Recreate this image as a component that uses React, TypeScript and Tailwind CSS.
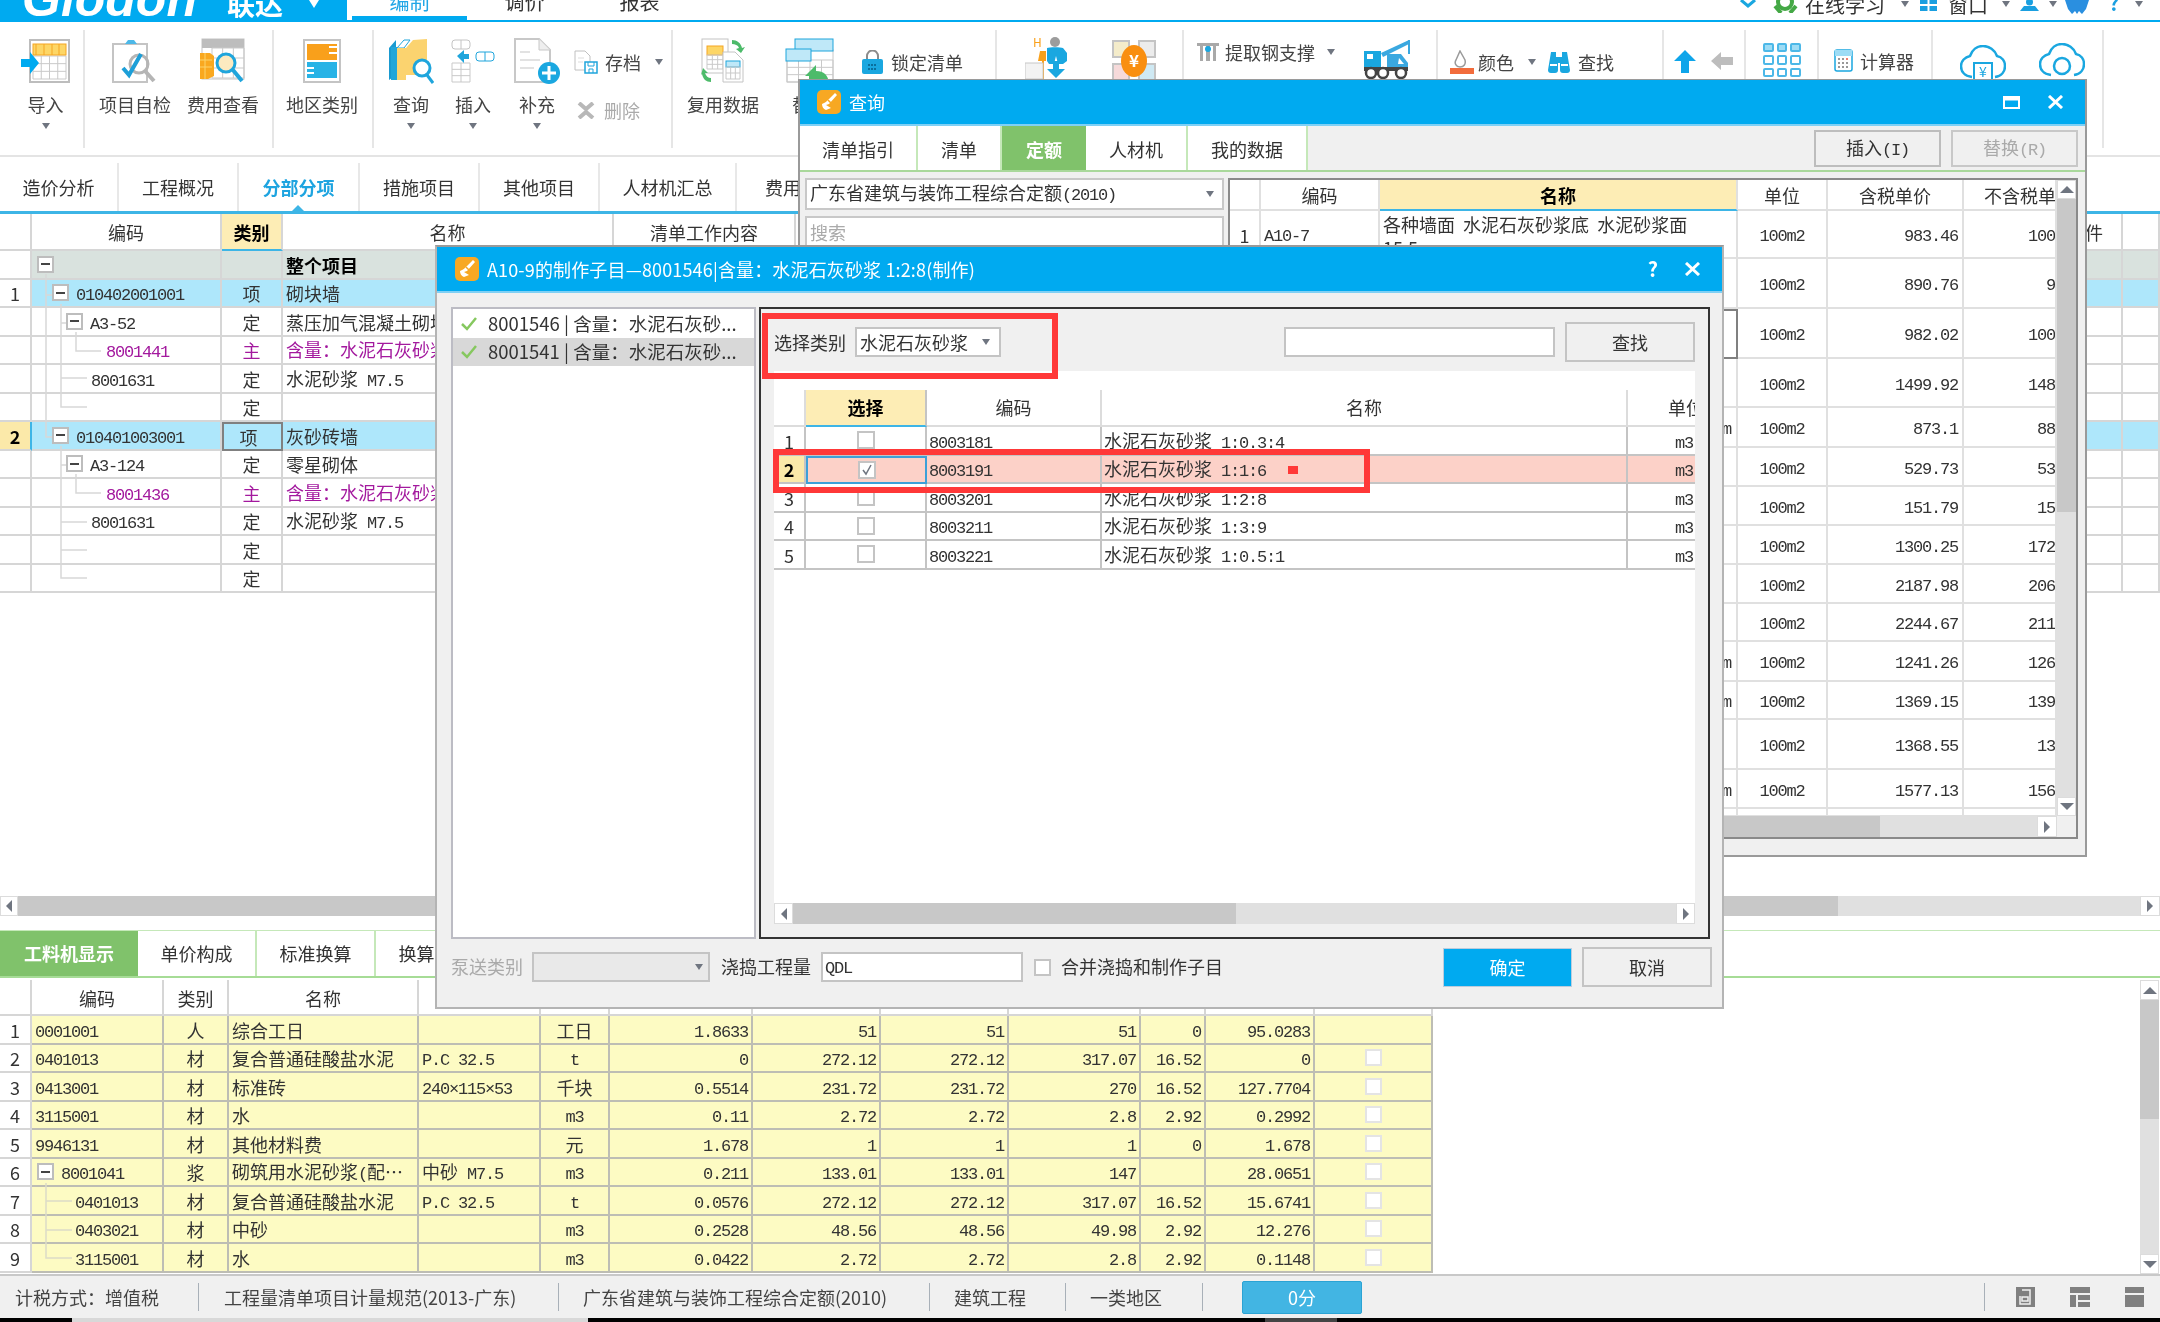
import React from "react";

const mono = "font-['Liberation_Mono','Noto_Sans_CJK_SC',monospace] text-[17px] tracking-[-1.2px]";

// ascii runs go in a narrow mono font, like the half-width digits of the grids
function Mix({ s }: { s: string }) {
  const parts = s.split(/([\x00-\x7f×]+)/).filter(Boolean);
  return (
    <span className="whitespace-pre">
      {parts.map((p, i) =>
        /^[\x00-\x7f×]+$/.test(p) ? (
          <span key={i} className={mono}>
            {p}
          </span>
        ) : (
          <span key={i}>{p}</span>
        ),
      )}
    </span>
  );
}

function Tri({ down = true, className = "" }: { down?: boolean; className?: string }) {
  return (
    <svg width="8" height="6" viewBox="0 0 8 6" className={"shrink-0 " + className}>
      <path d={down ? "M0 0h8L4 6z" : "M0 6h8L4 0z"} fill="#6f7580" />
    </svg>
  );
}

function Sep({ className = "" }: { className?: string }) {
  return <div className={"w-[2px] h-[118px] mt-[8px] bg-[#e6e6e6] shrink-0 " + className} />;
}

function Big({
  className,
  label,
  arrow,
  children,
}: {
  className: string;
  label: string;
  arrow?: boolean;
  children: React.ReactNode;
}) {
  return (
    <div className={"flex flex-col items-center pt-[16px] shrink-0 " + className}>
      <div className="h-[46px] flex items-center justify-center">{children}</div>
      <div className="mt-[8px] text-[18px] leading-[24px] text-[#444] whitespace-nowrap">{label}</div>
      {arrow && <Tri className="mt-[7px]" />}
    </div>
  );
}

function AppLogo() {
  return (
    <svg width="24" height="24" viewBox="0 0 24 24" className="shrink-0">
      <rect x="0" y="0" width="24" height="24" rx="5" fill="#f7a823" />
      <path d="M5 14c3-1 5-3 7-5l6-6 2 2-8 9-3 1 5 3-5 2c-3-1-4-4-4-6z" fill="#fff" />
      <path d="M11 10l3 3" stroke="#f7a823" strokeWidth="1.5" />
    </svg>
  );
}

function GridLines({ x, y, w, h, cols, rows, c = "#c9c9c9" }: { x: number; y: number; w: number; h: number; cols: number; rows: number; c?: string }) {
  const out: React.ReactNode[] = [];
  for (let i = 0; i <= cols; i++) out.push(<path key={"c" + i} d={`M${x + (i * w) / cols} ${y}v${h}`} stroke={c} fill="none" />);
  for (let i = 0; i <= rows; i++) out.push(<path key={"r" + i} d={`M${x} ${y + (i * h) / rows}h${w}`} stroke={c} fill="none" />);
  return <>{out}</>;
}

function ImportIcon() {
  return (
    <svg width="49" height="44" viewBox="0 0 49 44">
      <rect x="9" y="1" width="39" height="42" fill="#fff" stroke="#bdbdbd" strokeWidth="2" />
      <GridLines x={12} y={17} w={33} h={23} cols={4} rows={3} />
      <rect x="12" y="5" width="33" height="11" fill="#fdd666" stroke="#f5a623" />
      <path d="M15 16V5M23 16V5M31 16V5M38 16V5" stroke="#f5a623" />
      <path d="M0 20h9v-7l9 11-9 11v-7H0z" fill="#00aaf0" />
    </svg>
  );
}

function CheckIcon() {
  return (
    <svg width="46" height="46" viewBox="0 0 46 46">
      <rect x="1" y="6" width="34" height="38" fill="#fff" stroke="#c4c4c4" strokeWidth="2" />
      <path d="M13 6l3-4h6l3 4z" fill="#4cb8e8" />
      <circle cx="27" cy="26" r="9" fill="none" stroke="#b5b5b5" strokeWidth="3" />
      <path d="M33 33l9 10" stroke="#b5b5b5" strokeWidth="4" />
      <path d="M11 30l6 7 12-21" fill="none" stroke="#1d9fd8" strokeWidth="4" />
    </svg>
  );
}

function CostIcon() {
  return (
    <svg width="46" height="46" viewBox="0 0 46 46">
      <rect x="2" y="1" width="42" height="40" fill="#fff" stroke="#c4c4c4" />
      <rect x="2" y="1" width="42" height="9" fill="#bdbdbd" />
      <GridLines x={12} y={10} w={32} h={30} cols={3} rows={3} />
      <path d="M0 15h10l4 3v20l-6 3H0z" fill="#f9a81f" />
      <path d="M0 22h12M0 29h12M5 15v26" stroke="#fcd36b" />
      <circle cx="26" cy="25" r="9" fill="#fdeac0" stroke="#1fa5dc" strokeWidth="3" />
      <path d="M33 32l9 11" stroke="#1fa5dc" strokeWidth="4" />
    </svg>
  );
}

function RegionIcon() {
  return (
    <svg width="38" height="44" viewBox="0 0 38 44">
      <rect x="1" y="1" width="36" height="42" fill="#fff" stroke="#c4c4c4" strokeWidth="2" />
      <rect x="4" y="5" width="30" height="16" fill="#f9a01b" />
      <rect x="4" y="23" width="30" height="16" fill="#28b3e6" />
      <path d="M26 8h8M26 14h8M4 29h7M4 34h7" stroke="#fff" strokeWidth="2" />
    </svg>
  );
}

function QueryIcon() {
  return (
    <svg width="46" height="46" viewBox="0 0 46 46">
      <path d="M1 10l7-8v35l-7 5z" fill="#1a9ad0" />
      <rect x="3" y="9" width="6" height="33" fill="#21a6da" />
      <path d="M9 10l7-8h6l-6 8z" fill="#fff" stroke="#21a6da" />
      <path d="M18 10l7-8 14-1v36H18z" fill="#fbd36f" />
      <path d="M9 10h9v32H9z" fill="#fbd36f" />
      <circle cx="34" cy="30" r="8" fill="#fff" stroke="#1fa5dc" strokeWidth="3" />
      <path d="M39 37l6 8" stroke="#1fa5dc" strokeWidth="3" />
    </svg>
  );
}

function InsertIcon() {
  return (
    <svg width="44" height="44" viewBox="0 0 44 44">
      <rect x="1" y="1" width="18" height="9" rx="3" fill="#fff" stroke="#c4c4c4" />
      <path d="M10 1v9" stroke="#c4c4c4" />
      <GridLines x={1} y={24} w={18} h={19} cols={2} rows={3} />
      <path d="M6 17l7-6v4h5v5h-5v4z" fill="#1fa5dc" />
      <rect x="25" y="13" width="18" height="9" rx="3" fill="#fff" stroke="#1fa5dc" />
      <path d="M34 13v9" stroke="#1fa5dc" />
    </svg>
  );
}

function AddIcon() {
  return (
    <svg width="46" height="46" viewBox="0 0 46 46">
      <path d="M1 1h24l11 11v32H1z" fill="#fff" stroke="#c8c8c8" strokeWidth="2" />
      <path d="M25 1v11h11" fill="#eee" stroke="#c8c8c8" />
      <path d="M6 14h10M6 22h20M6 30h14" stroke="#e2e2e2" strokeWidth="2" />
      <circle cx="35" cy="35" r="11" fill="#1aa7e0" />
      <path d="M35 28v14M28 35h14" stroke="#fff" strokeWidth="3" />
    </svg>
  );
}

function ArchiveIcon() {
  return (
    <svg width="24" height="24" viewBox="0 0 24 24">
      <path d="M1 1h10l5 5v14H1z" fill="#fff" stroke="#c0c0c0" />
      <path d="M4 8h6M4 12h5" stroke="#ddd" />
      <rect x="11" y="12" width="12" height="11" fill="#fff" stroke="#1fa5dc" strokeWidth="1.5" />
      <path d="M14 12v4h6v-4M15 23v-4h4v4" stroke="#1fa5dc" fill="none" />
    </svg>
  );
}

function ReuseIcon() {
  return (
    <svg width="44" height="46" viewBox="0 0 44 46">
      <rect x="1" y="1" width="26" height="34" fill="#fff" stroke="#c4c4c4" />
      <rect x="6" y="8" width="16" height="9" fill="#fdd666" stroke="#f5a623" />
      <GridLines x={6} y={17} w={16} h={14} cols={3} rows={3} />
      <path d="M22 14h12l8 8v22H22z" fill="#fff" stroke="#c4c4c4" />
      <rect x="25" y="23" width="14" height="6" fill="#bfe8f8" stroke="#1fa5dc" />
      <GridLines x={25} y={29} w={14} h={12} cols={3} rows={2} />
      <path d="M31 2c5 0 9 3 10 8l3-1-4 6-5-4 3-1c-1-3-4-4-7-4z" fill="#4dbb6a" />
      <path d="M10 44C5 44 2 41 1 36l-1 1 2-7 5 5-3 0c1 3 3 5 6 5z" fill="#4dbb6a" />
    </svg>
  );
}

function ReplaceIcon() {
  return (
    <svg width="50" height="46" viewBox="0 0 50 46">
      <rect x="2" y="12" width="46" height="32" fill="#fff" stroke="#c8c8c8" />
      <GridLines x={2} y={22} w={46} h={22} cols={4} rows={3} />
      <rect x="10" y="1" width="38" height="12" fill="#bfe8f8" stroke="#1fa5dc" />
      <rect x="1" y="11" width="25" height="12" fill="#bfe8f8" stroke="#1fa5dc" />
      <path d="M20 38l11-11v6c8 0 12 4 13 12H24v-7z" fill="#4dbb6a" />
    </svg>
  );
}

function LockIcon() {
  return (
    <svg width="21" height="24" viewBox="0 0 21 24">
      <path d="M5 10V6a5.500 5.500 0 0 1 11 0v4" fill="none" stroke="#8b8b8b" strokeWidth="2" />
      <rect x="0" y="9" width="21" height="15" rx="2" fill="#1aa7e0" />
      <path d="M6 15h9M6 19h9" stroke="#0a6f9d" strokeWidth="2" strokeDasharray="2 1" />
    </svg>
  );
}

function WorkerIcon() {
  return (
    <svg width="44" height="42" viewBox="0 0 44 42">
      <circle cx="30" cy="5" r="5" fill="#9c9c9c" />
      <path d="M22 11c2-1 14-1 16 0l4 5v8l-4 3h-5l-2-8-2 8h-5l-2-3z" fill="#1aa7e0" />
      <path d="M28 24h6v8h6l-9 9-9-9h6z" fill="#1aa7e0" />
      <path d="M15 14h6v10h-2v18h-2V24h-4z" fill="#f9a01b" />
      <rect x="0" y="26" width="18" height="16" fill="#f3f3f3" stroke="#c8c8c8" />
      <text x="8" y="10" fontSize="12" fill="#f9a01b">H</text>
    </svg>
  );
}

function YenIcon() {
  return (
    <svg width="44" height="40" viewBox="0 0 44 40">
      <rect x="1" y="1" width="16" height="16" fill="#f4ecca" stroke="#c4c4c4" strokeWidth="2" />
      <rect x="27" y="1" width="16" height="16" fill="#ececec" stroke="#c4c4c4" strokeWidth="2" />
      <rect x="1" y="24" width="16" height="16" fill="#f6dada" stroke="#c4c4c4" strokeWidth="2" />
      <rect x="27" y="24" width="16" height="16" fill="#cfe9f3" stroke="#c4c4c4" strokeWidth="2" />
      <ellipse cx="22" cy="21" rx="13" ry="16" fill="#f98f10" />
      <text x="22" y="27" fontSize="17" fontWeight="700" fill="#fff" textAnchor="middle">¥</text>
    </svg>
  );
}

function SteelIcon() {
  return (
    <svg width="22" height="18" viewBox="0 0 22 18">
      <path d="M0 0h22v3h-3v15h-3V3h-3v15h-4V3H6v15H3V3H0z" fill="#a9a9a9" />
      <circle cx="11" cy="6" r="3" fill="#1aa7e0" />
    </svg>
  );
}

function CraneIcon() {
  return (
    <svg width="48" height="40" viewBox="0 0 48 40">
      <path d="M18 14L46 1v4L20 18z" fill="#3aa8e0" />
      <path d="M46 1v14" stroke="#3aa8e0" strokeWidth="2" />
      <rect x="1" y="12" width="17" height="16" fill="#1aa7e0" />
      <rect x="4" y="15" width="6" height="5" fill="#fff" />
      <path d="M24 15h14l7 9v7H24z" fill="#3aa8e0" />
      <path d="M36 19l5 6h-6z" fill="#fff" />
      <rect x="1" y="28" width="44" height="4" fill="#444" />
      <circle cx="8" cy="34" r="5" fill="#fff" stroke="#444" strokeWidth="2.500" />
      <circle cx="20" cy="34" r="5" fill="#fff" stroke="#444" strokeWidth="2.500" />
      <circle cx="38" cy="34" r="5" fill="#fff" stroke="#444" strokeWidth="2.500" />
    </svg>
  );
}

function BucketIcon() {
  return (
    <svg width="24" height="24" viewBox="0 0 24 24">
      <path d="M10 1l5 9c1 4-1 7-5 7s-6-4-4-7z" fill="#fff" stroke="#9a9a9a" strokeWidth="1.500" />
      <rect x="0" y="18" width="24" height="6" fill="#f26c3c" />
    </svg>
  );
}

function BinocularIcon() {
  return (
    <svg width="24" height="22" viewBox="0 0 24 22">
      <path d="M4 1h5v5h6V1h5l3 18a3 3 0 0 1-3 3h-4a3 3 0 0 1-3-3v-7h-2v7a3 3 0 0 1-3 3H4a3 3 0 0 1-3-3z" fill="#1aa7e0" />
      <path d="M3 14h7M14 14h7" stroke="#fff" strokeWidth="2" />
    </svg>
  );
}

function CalcIcon() {
  return (
    <svg width="19" height="23" viewBox="0 0 19 23">
      <rect x="1" y="1" width="17" height="21" rx="2" fill="#fff" stroke="#1aa7e0" strokeWidth="1.500" />
      <rect x="1" y="1" width="17" height="6" fill="#9edcf5" />
      <path d="M4 10h2M8 10h2M4 14h2M8 14h2M12 14h2M4 18h2M8 18h2M12 18h2" stroke="#777" strokeWidth="1.500" />
      <path d="M12 10h2" stroke="#f0503c" strokeWidth="1.500" />
    </svg>
  );
}

function CloudIcon({ kind }: { kind: "yen" | "find" }) {
  return (
    <svg width="46" height="34" viewBox="0 0 46 34">
      <path d="M12 32C4 31 1 26 1 21s4-9 9-10C12 5 17 1 23 1s12 4 14 10c5 1 8 5 8 10s-3 10-10 11" fill="none" stroke="#1aa7e0" strokeWidth="2.500" />
      {kind === "yen" ? (
        <>
          <path d="M14 34V18h18v16" fill="none" stroke="#1aa7e0" strokeWidth="2" />
          <text x="23" y="32" fontSize="14" fill="#1aa7e0" textAnchor="middle">¥</text>
        </>
      ) : (
        <circle cx="23" cy="23" r="8" fill="none" stroke="#1aa7e0" strokeWidth="2.500" />
      )}
    </svg>
  );
}

function TopBar() {
  return (
    <div className="h-[22px] flex shrink-0 overflow-hidden border-b-2 border-[#00aaf0] bg-white">
      <div className="w-[347px] h-[22px] bg-[#00aaf0] flex items-start overflow-hidden text-white shrink-0">
        <span className="ml-[22px] -mt-[26px] font-['Liberation_Sans',sans-serif] font-bold italic text-[50px] leading-[50px]">Glodon</span>
        <span className="ml-[30px] -mt-[12px] font-bold text-[28px] leading-[30px]">联达</span>
        <svg width="10" height="8" viewBox="0 0 10 8" className="ml-[26px]">
          <path d="M0 0h10L5 8z" fill="#fff" />
        </svg>
      </div>
      <div className="ml-[5px] w-[115px] h-[20px] border-b-4 border-[#00aaf0] text-center text-[20px] leading-[20px] text-[#21a6e6] overflow-hidden shrink-0">
        <div className="-mt-[8px]">编制</div>
      </div>
      <div className="w-[115px] text-center text-[20px] leading-[20px] text-[#333] shrink-0 -mt-[8px]">调价</div>
      <div className="w-[115px] text-center text-[20px] leading-[20px] text-[#333] shrink-0 -mt-[8px]">报表</div>
      <div className="ml-[1043px] flex items-start shrink-0 text-[20px] leading-[20px] text-[#333]">
        <svg width="16" height="8" viewBox="0 0 16 8" className="shrink-0">
          <path d="M1 0l7 6 7-6" fill="none" stroke="#1aa7e0" strokeWidth="3" />
        </svg>
        <svg width="25" height="13" viewBox="0 0 25 13" className="ml-[17px] shrink-0">
          <circle cx="12" cy="2" r="7" fill="none" stroke="#44a845" strokeWidth="4" />
          <path d="M2 6l6 7M23 6l-6 7" stroke="#44a845" strokeWidth="4" />
        </svg>
        <span className="ml-[7px] -mt-[5px] w-[80px] whitespace-nowrap">在线学习</span>
        <Tri className="ml-[16px] mt-[1px]" />
        <svg width="17" height="11" viewBox="0 0 17 11" className="ml-[11px] shrink-0">
          <path d="M0 0h7.500v4H0zM9.500 0H17v4H9.500zM0 6h7.500v5H0zM9.500 6H17v5H9.500z" fill="#1a9fe0" />
        </svg>
        <span className="ml-[11px] -mt-[5px] w-[40px] whitespace-nowrap">窗口</span>
        <Tri className="ml-[14px] mt-[1px]" />
        <svg width="19" height="11" viewBox="0 0 19 11" className="ml-[10px] shrink-0">
          <circle cx="9.500" cy="2" r="3.500" fill="#1a9fe0" />
          <path d="M0 11l4-5h11l4 5z" fill="#1a9fe0" />
        </svg>
        <Tri className="ml-[10px] mt-[1px]" />
        <svg width="24" height="14" viewBox="0 0 24 14" className="ml-[8px] shrink-0">
          <path d="M0 0h24l-3 9-4 5-3-3-2 3-2-3-3 3-4-5z" fill="#2a8fe0" />
        </svg>
        <span className="ml-[20px] -mt-[7px] text-[#1a9fe0] font-bold">?</span>
        <Tri className="ml-[16px] mt-[1px]" />
      </div>
    </div>
  );
}

function Ribbon() {
  return (
    <div className="h-[135px] flex shrink-0 border-b-2 border-[#e4e4e4] bg-white overflow-hidden">
      <Big className="ml-[8px] w-[75px]" label="导入" arrow>
        <ImportIcon />
      </Big>
      <Sep />
      <Big className="ml-[6px] w-[88px]" label="项目自检">
        <CheckIcon />
      </Big>
      <Big className="w-[88px]" label="费用查看">
        <CostIcon />
      </Big>
      <Sep className="ml-[5px]" />
      <Big className="w-[96px]" label="地区类别">
        <RegionIcon />
      </Big>
      <Sep className="ml-[2px]" />
      <Big className="ml-[5px] w-[64px]" label="查询" arrow>
        <QueryIcon />
      </Big>
      <Big className="w-[60px]" label="插入" arrow>
        <InsertIcon />
      </Big>
      <Big className="w-[68px]" label="补充" arrow>
        <AddIcon />
      </Big>
      <div className="w-[100px] shrink-0 flex flex-col text-[18px] leading-[24px] pl-[3px]">
        <div className="mt-[28px] flex items-center">
          <ArchiveIcon />
          <span className="ml-[7px] text-[#444]">存档</span>
          <Tri className="ml-[14px]" />
        </div>
        <div className="mt-[24px] flex items-center">
          <svg width="18" height="17" viewBox="0 0 18 17" className="ml-[3px]">
            <path d="M2 1l7 6 7-6M2 16l7-6 7 6" fill="none" stroke="#b8b8b8" strokeWidth="4" />
          </svg>
          <span className="ml-[9px] text-[#aaa]">删除</span>
        </div>
      </div>
      <Sep />
      <Big className="w-[100px]" label="复用数据">
        <ReuseIcon />
      </Big>
      <Big className="w-[74px]" label="替换">
        <ReplaceIcon />
      </Big>
      <div className="ml-[15px] mt-[28px] w-[133px] flex items-start shrink-0">
        <LockIcon />
        <span className="ml-[8px] text-[18px] leading-[24px] text-[#444] whitespace-nowrap">锁定清单</span>
      </div>
      <Sep />
      <div className="ml-[28px] mt-[15px] shrink-0">
        <WorkerIcon />
      </div>
      <div className="ml-[43px] mt-[18px] shrink-0">
        <YenIcon />
      </div>
      <Sep className="ml-[26px]" />
      <div className="ml-[13px] mt-[20px] w-[166px] flex items-center h-[20px] shrink-0">
        <SteelIcon />
        <span className="ml-[6px] text-[18px] leading-[24px] text-[#444] whitespace-nowrap">提取钢支撑</span>
        <Tri className="ml-[12px]" />
      </div>
      <div className="mt-[17px] shrink-0">
        <CraneIcon />
      </div>
      <Sep className="ml-[25px]" />
      <div className="ml-[12px] mt-[28px] flex items-start shrink-0">
        <BucketIcon />
        <span className="ml-[4px] text-[18px] leading-[24px] text-[#444] whitespace-nowrap">颜色</span>
        <Tri className="ml-[14px] mt-[9px]" />
      </div>
      <div className="ml-[11px] mt-[29px] flex items-start shrink-0">
        <BinocularIcon />
        <span className="ml-[7px] -mt-[1px] text-[18px] leading-[24px] text-[#444] whitespace-nowrap">查找</span>
      </div>
      <Sep className="ml-[48px]" />
      <svg width="22" height="23" viewBox="0 0 22 23" className="ml-[10px] mt-[28px] shrink-0">
        <path d="M11 0l11 11h-7v12H7V11H0z" fill="#0ea5ea" />
      </svg>
      <svg width="22" height="18" viewBox="0 0 22 18" className="ml-[15px] mt-[30px] shrink-0">
        <path d="M0 9l10-9v5h12v8H10v5z" fill="#bdbdbd" />
      </svg>
      <Sep className="ml-[11px]" />
      <div className="ml-[17px] mt-[21px] grid grid-cols-3 gap-[3px] w-[38px] h-[34px] shrink-0">
        {["a", "b", "c", "d", "e", "f", "g", "h", "i"].map((k, i) => (
          <div key={k} className={"rounded-[2px] border-2 border-[#4cb8e8] " + (i < 3 ? "bg-[#9edcf5]" : "bg-white")} />
        ))}
      </div>
      <Sep className="ml-[16px]" />
      <div className="ml-[15px] mt-[27px] flex items-start shrink-0">
        <CalcIcon />
        <span className="ml-[7px] text-[18px] leading-[24px] text-[#444] whitespace-nowrap">计算器</span>
      </div>
      <Sep className="ml-[17px]" />
      <div className="ml-[27px] mt-[23px] shrink-0">
        <CloudIcon kind="yen" />
      </div>
      <div className="ml-[33px] mt-[21px] shrink-0">
        <CloudIcon kind="find" />
      </div>
      <Sep className="ml-[17px]" />
    </div>
  );
}

const mainTabs = [
  { t: "造价分析", c: "w-[119px] text-[#333]" },
  { t: "工程概况", c: "w-[120px] text-[#333]" },
  { t: "分部分项", c: "w-[121px] text-[#1ea4e0] font-bold", on: true },
  { t: "措施项目", c: "w-[120px] text-[#333]" },
  { t: "其他项目", c: "w-[120px] text-[#333]" },
  { t: "人材机汇总", c: "w-[137px] text-[#333]" },
  { t: "费用汇总", c: "w-[130px] text-[#333]" },
];

function MainTabs() {
  return (
    <div className="mt-[6px] h-[51px] flex shrink-0 border-b-[3px] border-[#3db5e6] relative">
      {mainTabs.map((x) => (
        <div key={x.t} className={"relative flex items-center justify-center border-r-2 border-[#e8e8e8] text-[18px] whitespace-nowrap overflow-hidden shrink-0 " + x.c}>
          {x.t}
          {x.on && <div className="absolute bottom-0 left-[53px] w-0 h-0 border-x-[6px] border-x-transparent border-b-[6px] border-b-[#3db5e6]" />}
        </div>
      ))}
    </div>
  );
}

const cellB = "flex items-center overflow-hidden whitespace-nowrap border-r-2 border-b-2 border-[#d6d6d6] px-[2px] pt-[2px]";
const mainCols = "grid grid-cols-[32px_190px_61px_331px_182px_1327px_37px] h-[28.5px] text-[18px]";

type MainRow = { no?: string; pad: string; code: string; box?: boolean; type: string; name: string; bg?: string; purple?: boolean; active?: boolean; bold?: boolean };

const mainRows: MainRow[] = [
  { pad: "pl-[5px]", code: "", box: true, type: "", name: "整个项目", bg: "bg-[#d9e2de]", bold: true },
  { no: "1", pad: "pl-[20px]", code: "010402001001", box: true, type: "项", name: "砌块墙", bg: "bg-[#aee7fb]" },
  { pad: "pl-[34px]", code: "A3-52", box: true, type: "定", name: "蒸压加气混凝土砌块墙" },
  { pad: "pl-[74px]", code: "8001441", type: "主", name: "含量：水泥石灰砂浆 1:3", purple: true },
  { pad: "pl-[59px]", code: "8001631", type: "定", name: "水泥砂浆 M7.5" },
  { pad: "", code: "", type: "定", name: "" },
  { no: "2", pad: "pl-[20px]", code: "010401003001", box: true, type: "项", name: "灰砂砖墙", bg: "bg-[#aee7fb]", active: true },
  { pad: "pl-[34px]", code: "A3-124", box: true, type: "定", name: "零星砌体" },
  { pad: "pl-[74px]", code: "8001436", type: "主", name: "含量：水泥石灰砂浆 1:3", purple: true },
  { pad: "pl-[59px]", code: "8001631", type: "定", name: "水泥砂浆 M7.5" },
  { pad: "", code: "", type: "定", name: "" },
  { pad: "", code: "", type: "定", name: "" },
];

function MinusBox({ className = "" }: { className?: string }) {
  return (
    <div className={"w-[17px] h-[17px] bg-white border-2 border-[#bdbdbd] flex items-center justify-center shrink-0 -mt-[2px] " + className}>
      <div className="w-[9px] h-[2px] bg-[#444]" />
    </div>
  );
}

function MainGrid() {
  return (
    <div className="relative flex-1 bg-white overflow-hidden">
      <div className={mainCols + " !h-[37px] text-[#333]"}>
        <div className={cellB} />
        <div className={cellB + " justify-center"}>编码</div>
        <div className={cellB + " justify-center bg-[#fdedb5] font-bold text-black !border-b-[#3db5e6]"}>类别</div>
        <div className={cellB + " justify-center"}>名称</div>
        <div className={cellB + " justify-center"}>清单工作内容</div>
        <div className={cellB + " justify-end pr-[18px]"}>项目特征条件</div>
        <div className={cellB} />
      </div>
      {mainRows.map((r, i) => {
        const rowColor = r.purple ? "text-[#a3199e]" : "text-[#333]";
        return (
          <div key={i} className={mainCols + " " + rowColor}>
            <div className={cellB + " justify-center " + (r.active ? "bg-[#fbe9a9] font-bold !border-r-[#3db5e6] !text-black" : "")}>{r.no}</div>
            <div className={cellB + " " + r.pad + " " + (r.bg ?? "")}>
              {r.box && <MinusBox className="mr-[7px]" />}
              <Mix s={r.code} />
            </div>
            <div className={cellB + " justify-center " + (r.bg ?? "") + (r.active ? " !border-2 !border-[#808080] pr-[10px]" : "")}>{r.type}</div>
            <div className={cellB + " pl-[3px] " + (r.bg ?? "") + (r.bold ? " font-bold text-black" : "")}>
              <Mix s={r.name} />
            </div>
            <div className={cellB + " " + (r.bg ?? "")} />
            <div className={cellB + " " + (r.bg ?? "")} />
            <div className={cellB + " " + (r.bg ?? "")} />
          </div>
        );
      })}
      <svg className="absolute left-0 top-0 pointer-events-none" width="120" height="400" viewBox="0 214 120 400">
        <path
          d="M46 274V437H52M46 295H52M61 304V407H87M61 323H66M61 378H87M76 332V351H101M61 446V578H87M61 465H66M76 474V493H101M61 522H87M61 550H87"
          fill="none"
          stroke="#d8d8d8"
          strokeWidth="1.500"
        />
      </svg>
    </div>
  );
}

function ScrollBtn({ dir, className = "" }: { dir: "l" | "r" | "u" | "d"; className?: string }) {
  const d = { l: "M7 0v12L1 6z", r: "M1 0v12l6-6z", u: "M0 9h14L7 2z", d: "M0 2h14L7 9z" }[dir];
  const size = dir === "l" || dir === "r" ? "8 12" : "14 11";
  const [w, h] = size.split(" ");
  return (
    <div className={"flex items-center justify-center bg-white border border-[#dcdcdc] shrink-0 " + className}>
      <svg width={w} height={h} viewBox={`0 0 ${size}`}>
        <path d={d} fill="#6f7580" />
      </svg>
    </div>
  );
}

const lowerHeads = ["", "编码", "类别", "名称", "规格型号", "单位", "含量", "不含税预算价", "不含税市场价", "含税市场价", "税率", "合价", "是否暂估"];
const lowerAlign = ["justify-center", "justify-start pl-[3px]", "justify-center", "justify-start pl-[3px]", "justify-start pl-[3px]", "justify-center", "justify-end", "justify-end", "justify-end", "justify-end", "justify-end", "justify-end", "justify-center"];
const lowerRows: string[][] = [
  ["1", "0001001", "人", "综合工日", "", "工日", "1.8633", "51", "51", "51", "0", "95.0283"],
  ["2", "0401013", "材", "复合普通硅酸盐水泥", "P.C 32.5", "t", "0", "272.12", "272.12", "317.07", "16.52", "0"],
  ["3", "0413001", "材", "标准砖", "240×115×53", "千块", "0.5514", "231.72", "231.72", "270", "16.52", "127.7704"],
  ["4", "3115001", "材", "水", "", "m3", "0.11", "2.72", "2.72", "2.8", "2.92", "0.2992"],
  ["5", "9946131", "材", "其他材料费", "", "元", "1.678", "1", "1", "1", "0", "1.678"],
  ["6", "8001041", "浆", "砌筑用水泥砂浆(配⋯", "中砂 M7.5", "m3", "0.211", "133.01", "133.01", "147", "", "28.0651"],
  ["7", "0401013", "材", "复合普通硅酸盐水泥", "P.C 32.5", "t", "0.0576", "272.12", "272.12", "317.07", "16.52", "15.6741"],
  ["8", "0403021", "材", "中砂", "", "m3", "0.2528", "48.56", "48.56", "49.98", "2.92", "12.276"],
  ["9", "3115001", "材", "水", "", "m3", "0.0422", "2.72", "2.72", "2.8", "2.92", "0.1148"],
];
const lowerCols = "grid grid-cols-[32px_132px_65px_190px_122px_69px_143px_128px_128px_132px_65px_109px_118px] text-[18px] text-[#333]";
const yellowB = "flex items-center overflow-hidden whitespace-nowrap border-r-2 border-b-2 border-[#bdbdb4] pt-[2px]";

function LowerPanel() {
  return (
    <div className="flex flex-col shrink-0 bg-white">
      <div className="mt-[14px] h-[46px] flex border-t border-[#c5e8b9] shrink-0">
        <div className="w-[138px] flex items-center justify-center bg-[#80c26b] text-white font-bold text-[18px]">工料机显示</div>
        <div className="w-[119px] flex items-center justify-center border-r-2 border-[#c5e8b9] text-[18px] text-[#333]">单价构成</div>
        <div className="w-[119px] flex items-center justify-center border-r-2 border-[#c5e8b9] text-[18px] text-[#333]">标准换算</div>
        <div className="w-[119px] flex items-center justify-center border-r-2 border-[#c5e8b9] text-[18px] text-[#333]">换算信息</div>
      </div>
      <div className="h-[2px] bg-[#a6dc96] shrink-0" />
      <div className="flex h-[294px] mt-[2px]">
        <div className="relative w-[1433px] shrink-0">
          <div className={lowerCols + " h-[36px]"}>
            {lowerHeads.map((h, i) => (
              <div key={i} className="flex items-center justify-center border-r-2 border-b-2 border-[#d6d6d6] whitespace-nowrap overflow-hidden pt-[2px]">
                {h}
              </div>
            ))}
          </div>
          {lowerRows.map((r, i) => (
            <div key={i} className={lowerCols + " h-[28.5px]"}>
              <div className={yellowB + " justify-center bg-white !border-[#d6d6d6]"}>{r[0]}</div>
              {r.slice(1).map((c, j) => (
                <div key={j} className={yellowB + " bg-[#fdfbc3] " + lowerAlign[j + 1] + (j >= 5 ? " pr-[3px]" : "") + (j === 0 && i === 5 ? " !pl-[5px]" : "") + (j === 0 && i > 5 ? " !pl-[43px]" : "")}>
                  {j === 0 && i === 5 && <MinusBox className="mr-[7px]" />}
                  <Mix s={c} />
                </div>
              ))}
              <div className={yellowB + " bg-[#fdfbc3] justify-center !pt-0"}>
                {i > 0 && <div className="w-[17px] h-[17px] bg-white border-2 border-[#e4e4e4]" />}
              </div>
            </div>
          ))}
          <svg className="absolute left-0 top-0 pointer-events-none" width="80" height="300" viewBox="0 980 80 300">
            <path d="M46 1183V1258H72M46 1201H72M46 1230H72" fill="none" stroke="#dcdcc8" strokeWidth="1.500" />
          </svg>
        </div>
        <div className="flex-1" />
        <div className="mr-[1px] w-[19px] flex flex-col bg-[#e0e0e0] shrink-0">
          <ScrollBtn dir="u" className="h-[20px]" />
          <div className="h-[119px] bg-[#c8c8c8]" />
          <div className="flex-1" />
          <ScrollBtn dir="d" className="h-[20px]" />
        </div>
      </div>
    </div>
  );
}

function StatusBar() {
  return (
    <div className="flex flex-col shrink-0">
      <div className="h-[44px] flex items-center bg-[#f0f0f0] border-t-2 border-[#c8c8c8] text-[18px] text-[#444] whitespace-nowrap">
        <span className="ml-[15px] w-[183px]">计税方式：增值税</span>
        <div className="w-[1px] h-[28px] bg-[#a8b0b8]" />
        <span className="ml-[25px] w-[334px]">工程量清单项目计量规范(2013-广东)</span>
        <div className="w-[1px] h-[28px] bg-[#a8b0b8]" />
        <span className="ml-[24px] w-[346px]">广东省建筑与装饰工程综合定额(2010)</span>
        <div className="w-[1px] h-[28px] bg-[#a8b0b8]" />
        <span className="ml-[24px] w-[111px]">建筑工程</span>
        <div className="w-[1px] h-[28px] bg-[#a8b0b8]" />
        <span className="ml-[24px] w-[112px]">一类地区</span>
        <div className="w-[1px] h-[28px] bg-[#a8b0b8]" />
        <div className="ml-[39px] w-[120px] h-[33px] rounded-[2px] bg-[#42b5e3] border border-[#2ba3d4] text-white flex items-center justify-center">0分</div>
        <div className="ml-[622px] w-[1px] h-[28px] bg-[#a8b0b8]" />
        <svg width="19" height="20" viewBox="0 0 19 20" className="ml-[31px]">
          <path d="M0 0h19v20H0z" fill="#808080" />
          <path d="M6 3h8v14H4V9M6 10h6v4H6z" fill="none" stroke="#f0f0f0" strokeWidth="1.500" />
        </svg>
        <svg width="20" height="20" viewBox="0 0 20 20" className="ml-[35px]">
          <path d="M0 0h20v6H0zM0 8h6v12H0zM8 8h12v5H8zM8 15h12v5H8z" fill="#808080" />
        </svg>
        <svg width="19" height="20" viewBox="0 0 19 20" className="ml-[35px]">
          <path d="M0 0h19v6H0zM0 8h19v12H0z" fill="#808080" />
        </svg>
      </div>
      <div className="h-[4px] flex bg-black">
        <div className="ml-[72px] w-[516px] bg-[#d8d8d8]" />
        <div className="ml-[677px] w-[72px] bg-[#444]" />
      </div>
    </div>
  );
}

const qRows = [
  { h: "h-[48px]", no: "1", code: "A10-7", name: "各种墙面  水泥石灰砂浆底  水泥砂浆面\n15:5", price: "983.46", net: "100" },
  { h: "h-[50px]", no: "", code: "", name: "", price: "890.76", net: "9" },
  { h: "h-[50px]", no: "", code: "", name: "", price: "982.02", net: "100", sel: true },
  { h: "h-[49px]", no: "", code: "", name: "", price: "1499.92", net: "148" },
  { h: "h-[40px]", no: "", code: "", name: "m", price: "873.1", net: "88" },
  { h: "h-[38.5px]", no: "", code: "", name: "", price: "529.73", net: "53" },
  { h: "h-[39.5px]", no: "", code: "", name: "", price: "151.79", net: "15" },
  { h: "h-[39px]", no: "", code: "", name: "", price: "1300.25", net: "172" },
  { h: "h-[38.5px]", no: "", code: "", name: "", price: "2187.98", net: "206" },
  { h: "h-[38.5px]", no: "", code: "", name: "", price: "2244.67", net: "211" },
  { h: "h-[40px]", no: "", code: "", name: "m", price: "1241.26", net: "126" },
  { h: "h-[38px]", no: "", code: "", name: "m", price: "1369.15", net: "139" },
  { h: "h-[50px]", no: "", code: "", name: "", price: "1368.55", net: "13" },
  { h: "h-[39px]", no: "", code: "", name: "m", price: "1577.13", net: "156" },
  { h: "h-[8px]", no: "", code: "", name: "", price: "", net: "" },
];

const qCols = "grid grid-cols-[31px_119px_358px_90px_136px_93px] text-[18px] text-[#333]";
const qCell = "flex items-center overflow-hidden whitespace-nowrap border-r-2 border-b-2 border-[#e0e0e0] pt-[2px]";

function QueryDialog() {
  return (
    <div className="absolute left-[798px] top-[79px] w-[1289px] h-[778px] flex flex-col bg-[#f0f0f0] border-2 border-[#9a9a9a] border-l-[#9a9a9a]">
      <div className="h-[46px] -mt-[1px] flex items-center bg-[#00aaf0] border-b-2 border-[#7fd0f5] shrink-0 text-white">
        <div className="ml-[17px]">
          <AppLogo />
        </div>
        <span className="ml-[8px] text-[18px]">查询</span>
        <svg width="17" height="13" viewBox="0 0 17 13" className="ml-[1118px]">
          <path d="M1 1h15v11H1z" fill="none" stroke="#fff" strokeWidth="2" />
          <path d="M1 3h15" stroke="#fff" strokeWidth="3" />
        </svg>
        <svg width="17" height="14" viewBox="0 0 17 14" className="ml-[27px]">
          <path d="M2 1l13 12M15 1L2 13" stroke="#fff" strokeWidth="3" />
        </svg>
      </div>
      <div className="h-[46px] flex border-b-2 border-[#a9d89b] shrink-0 text-[18px] text-[#333]">
        <div className="w-[118px] pt-[2px] flex items-center justify-center bg-white border-r-2 border-[#c5e8b9]">清单指引</div>
        <div className="w-[84px] pt-[2px] flex items-center justify-center bg-white border-r-2 border-[#c5e8b9]">清单</div>
        <div className="w-[84px] pt-[2px] flex items-center justify-center bg-[#80c26b] text-white font-bold">定额</div>
        <div className="w-[102px] pt-[2px] flex items-center justify-center bg-white border-r-2 border-[#c5e8b9]">人材机</div>
        <div className="w-[120px] pt-[2px] flex items-center justify-center bg-white border-r-2 border-[#c5e8b9]">我的数据</div>
        <div className="ml-[506px] mt-[4px] w-[127px] h-[37px] pt-[1px] border-2 border-[#bdbdbd] flex items-center justify-center">
          <Mix s="插入(I)" />
        </div>
        <div className="ml-[10px] mt-[4px] w-[127px] h-[37px] pt-[1px] border-2 border-[#c8c8c8] flex items-center justify-center text-[#aaa]">
          <Mix s="替换(R)" />
        </div>
      </div>
      <div className="flex flex-1 min-h-0 pt-[6px] pl-[5px] pr-[7px] pb-[16px]">
        <div className="w-[423px] shrink-0 flex flex-col text-[18px] text-[#333]">
          <div className="w-[419px] h-[32px] flex items-center justify-between bg-white border-2 border-[#c8c8c8] pl-[3px] pr-[8px]">
            <Mix s="广东省建筑与装饰工程综合定额(2010)" />
            <Tri />
          </div>
          <div className="mt-[6px] w-[419px] h-[40px] flex items-start leading-[24px] bg-white border-2 border-[#c8c8c8] pl-[3px] pt-[2px] text-[#aaa]">搜索</div>
        </div>
        <div className="flex-1 flex flex-col border-2 border-[#8a8a8a] bg-white overflow-hidden">
          <div className="flex flex-1 min-h-0">
            <div className="w-[827px] shrink-0 overflow-hidden">
              <div className={qCols + " h-[31px]"}>
                <div className={qCell} />
                <div className={qCell + " justify-center"}>编码</div>
                <div className={qCell + " justify-center bg-[#fdedb5] font-bold text-black !border-b-[#3db5e6]"}>名称</div>
                <div className={qCell + " justify-center"}>单位</div>
                <div className={qCell + " justify-center"}>含税单价</div>
                <div className={qCell + " pl-[20px]"}>不含税单价</div>
              </div>
              {qRows.map((r, i) => (
                <div key={i} className={qCols + " " + r.h}>
                  <div className={qCell + " justify-center"}>{r.no}</div>
                  <div className={qCell + " pl-[3px]"}>
                    <Mix s={r.code} />
                  </div>
                  <div className={qCell + (r.name === "m" ? " justify-end pr-[5px]" : " !items-start !pt-[1px] pl-[3px] leading-[24px]") + (r.sel ? " !border-2 !border-[#808080]" : "")}>
                    <span className="whitespace-pre-wrap">
                      {r.name === "m" ? <Mix s="m" /> : r.name}
                    </span>
                  </div>
                  <div className={qCell + " justify-center"}>
                    {r.price && <Mix s="100m2" />}
                  </div>
                  <div className={qCell + " justify-end pr-[4px]"}>
                    <Mix s={r.price} />
                  </div>
                  <div className={qCell + " justify-end"}>
                    <Mix s={r.net} />
                  </div>
                </div>
              ))}
            </div>
            <div className="w-[19px] flex flex-col bg-[#e0e0e0] shrink-0">
              <ScrollBtn dir="u" className="h-[19px]" />
              <div className="h-[313px] bg-[#c8c8c8]" />
              <div className="flex-1" />
              <ScrollBtn dir="d" className="h-[19px]" />
            </div>
          </div>
          <div className="h-[21px] flex bg-[#e0e0e0] shrink-0">
            <div className="w-[650px] bg-[#c8c8c8]" />
            <div className="w-[157px]" />
            <ScrollBtn dir="r" className="w-[20px]" />
            <div className="flex-1 bg-[#f0f0f0]" />
          </div>
        </div>
      </div>
    </div>
  );
}

const subRows = [
  { no: "1", code: "8003181", name: "水泥石灰砂浆 1:0.3:4" },
  { no: "2", code: "8003191", name: "水泥石灰砂浆 1:1:6", sel: true },
  { no: "3", code: "8003201", name: "水泥石灰砂浆 1:2:8" },
  { no: "4", code: "8003211", name: "水泥石灰砂浆 1:3:9" },
  { no: "5", code: "8003221", name: "水泥石灰砂浆 1:0.5:1" },
];

const subCols = "grid grid-cols-[32px_121px_175px_526px_67px] text-[18px] text-[#333]";
const subCell = "flex items-center overflow-hidden whitespace-nowrap border-r-2 border-b-2 border-[#c4c4c4]";

function ItemDialog() {
  return (
    <div className="absolute left-[435px] top-[245px] w-[1289px] h-[764px] flex flex-col bg-[#f0f0f0] border-2 border-t-[#9a9a9a] border-[#b4b4b4] text-[#333]">
      <div className="h-[46px] flex items-center bg-[#00aaf0] border-b-2 border-[#7fd0f5] text-white shrink-0">
        <div className="ml-[18px]">
          <AppLogo />
        </div>
        <span className="ml-[8px] text-[18px] tracking-[0.15px] whitespace-nowrap">A10-9的制作子目—8001546|含量：水泥石灰砂浆 1:2:8(制作)</span>
        <span className="ml-auto text-[20px] font-bold">?</span>
        <svg width="17" height="14" viewBox="0 0 17 14" className="ml-[26px] mr-[21px]">
          <path d="M2 1l13 12M15 1L2 13" stroke="#fff" strokeWidth="3" />
        </svg>
      </div>
      <div className="flex h-[632px] mt-[14px] ml-[14px] shrink-0">
        <div className="w-[305px] bg-white border-2 border-[#bcbcc4] shrink-0 text-[18.5px]">
          <div className="h-[29px] flex items-center">
            <Check />
            <span className="ml-[11px] whitespace-nowrap">8001546 | 含量：水泥石灰砂...</span>
          </div>
          <div className="h-[28px] flex items-center bg-[#d8d8d8]">
            <Check />
            <span className="ml-[11px] whitespace-nowrap">8001541 | 含量：水泥石灰砂...</span>
          </div>
        </div>
        <div className="ml-[3px] w-[951px] flex flex-col border-2 border-[#333] pl-[13px] pr-[13px] pb-[13px] shrink-0">
          <div className="h-[62px] pt-[4px] flex items-center text-[18px] shrink-0 whitespace-nowrap">
            <span>选择类别</span>
            <div className="ml-[9px] w-[146px] h-[30px] flex items-center justify-between bg-white border-2 border-[#c4c4c4] pl-[3px] pr-[9px]">
              水泥石灰砂浆
              <Tri />
            </div>
            <div className="ml-[283px] w-[271px] h-[30px] bg-white border-2 border-[#c4c4c4]" />
            <div className="ml-[10px] w-[130px] h-[40px] border-2 border-[#c4c4c4] flex items-center justify-center">查找</div>
          </div>
          <div className="flex-1 bg-white flex flex-col min-h-0 pt-[19px]">
            <div className="flex-1 min-h-0">
              <div className={subCols + " h-[37px]"}>
                <div className={subCell + " !border-[#dcdcdc]"} />
                <div className={subCell + " justify-center bg-[#fdedb5] font-bold text-black !border-b-[#3db5e6]"}>选择</div>
                <div className={subCell + " justify-center !border-[#dcdcdc]"}>编码</div>
                <div className={subCell + " justify-center !border-[#dcdcdc]"}>名称</div>
                <div className={subCell + " pl-[40px] !border-r-0 !border-[#dcdcdc]"}>单位</div>
              </div>
              {subRows.map((r) => (
                <div key={r.no} className={subCols + " h-[28.5px] " + (r.sel ? "bg-[#fcd1c8]" : "")}>
                  <div className={subCell + " justify-center pt-[2px] " + (r.sel ? "bg-[#fbe9a9] font-bold text-black" : "bg-white")}>{r.no}</div>
                  <div className={subCell + " justify-center " + (r.sel ? "!border-2 !border-[#3ca0d8]" : "")}>
                    <div className="w-[18px] h-[18px] bg-white border-2 border-[#c4c4c4] flex items-center justify-center">
                      {r.sel && (
                        <svg width="12" height="12" viewBox="0 0 12 12">
                          <path d="M2 6l3 4 5-9" fill="none" stroke="#6f7580" strokeWidth="1.500" />
                        </svg>
                      )}
                    </div>
                  </div>
                  <div className={subCell + " pl-[2px] pt-[2px]"}>
                    <Mix s={r.code} />
                  </div>
                  <div className={subCell + " pl-[2px] pt-[2px]"}>
                    <Mix s={r.name} />
                  </div>
                  <div className={subCell + " justify-end pr-[2px] pt-[2px] !border-r-0"}>
                    <Mix s="m3" />
                  </div>
                </div>
              ))}
            </div>
            <div className="h-[21px] flex bg-[#e0e0e0] shrink-0">
              <ScrollBtn dir="l" className="w-[19px]" />
              <div className="w-[443px] bg-[#c8c8c8]" />
              <div className="flex-1" />
              <ScrollBtn dir="r" className="w-[19px]" />
            </div>
          </div>
        </div>
      </div>
      <div className="flex items-start mt-[8px] ml-[14px] text-[18px] whitespace-nowrap">
        <span className="mt-[6px] text-[#aaa] w-[81px]">泵送类别</span>
        <div className="mt-[5px] w-[178px] h-[30px] flex items-center justify-end bg-[#e9e9e9] border-2 border-[#c4c4c4] pr-[5px]">
          <Tri />
        </div>
        <span className="mt-[6px] ml-[11px] w-[100px]">浇捣工程量</span>
        <div className="mt-[5px] w-[202px] h-[30px] flex items-center bg-white border-2 border-[#c4c4c4] pl-[2px]">
          <Mix s="QDL" />
        </div>
        <div className="mt-[12px] ml-[11px] w-[17px] h-[17px] bg-white border-2 border-[#c4c4c4]" />
        <span className="mt-[6px] ml-[10px] w-[168px]">合并浇捣和制作子目</span>
        <div className="mt-[1px] ml-[214px] w-[129px] h-[39px] flex items-center justify-center bg-[#00aaf0] text-white border border-[#bcd]">确定</div>
        <div className="ml-[10px] w-[130px] h-[40px] flex items-center justify-center border-2 border-[#c4c4c4]">取消</div>
      </div>
      <div className="absolute left-[325px] top-[66px] w-[296px] h-[66px] border-[6px] border-[#ff3838] pointer-events-none" />
      <div className="absolute left-[336px] top-[202px] w-[597px] h-[44px] border-[6px] border-[#ff3838] pointer-events-none" />
      <div className="absolute left-[851px] top-[219px] w-[10px] h-[8px] bg-[#ff3838]" />
    </div>
  );
}

function Check() {
  return (
    <svg width="16" height="14" viewBox="0 0 16 14" className="ml-[8px] shrink-0">
      <path d="M1 7l5 5 9-11" fill="none" stroke="#86c85f" strokeWidth="2.500" />
    </svg>
  );
}

export default function App() {
  return (
    <div className="relative w-[2160px] h-[1322px] overflow-hidden flex flex-col bg-white font-['Noto_Sans_CJK_SC',sans-serif] blur-[0.4px]">
      <TopBar />
      <Ribbon />
      <MainTabs />
      <MainGrid />
      <div className="h-[20px] flex bg-[#e0e0e0] shrink-0">
        <ScrollBtn dir="l" className="w-[18px]" />
        <div className="w-[1820px] bg-[#c8c8c8]" />
        <div className="flex-1" />
        <ScrollBtn dir="r" className="w-[20px]" />
      </div>
      <LowerPanel />
      <StatusBar />
      <QueryDialog />
      <ItemDialog />
    </div>
  );
}
